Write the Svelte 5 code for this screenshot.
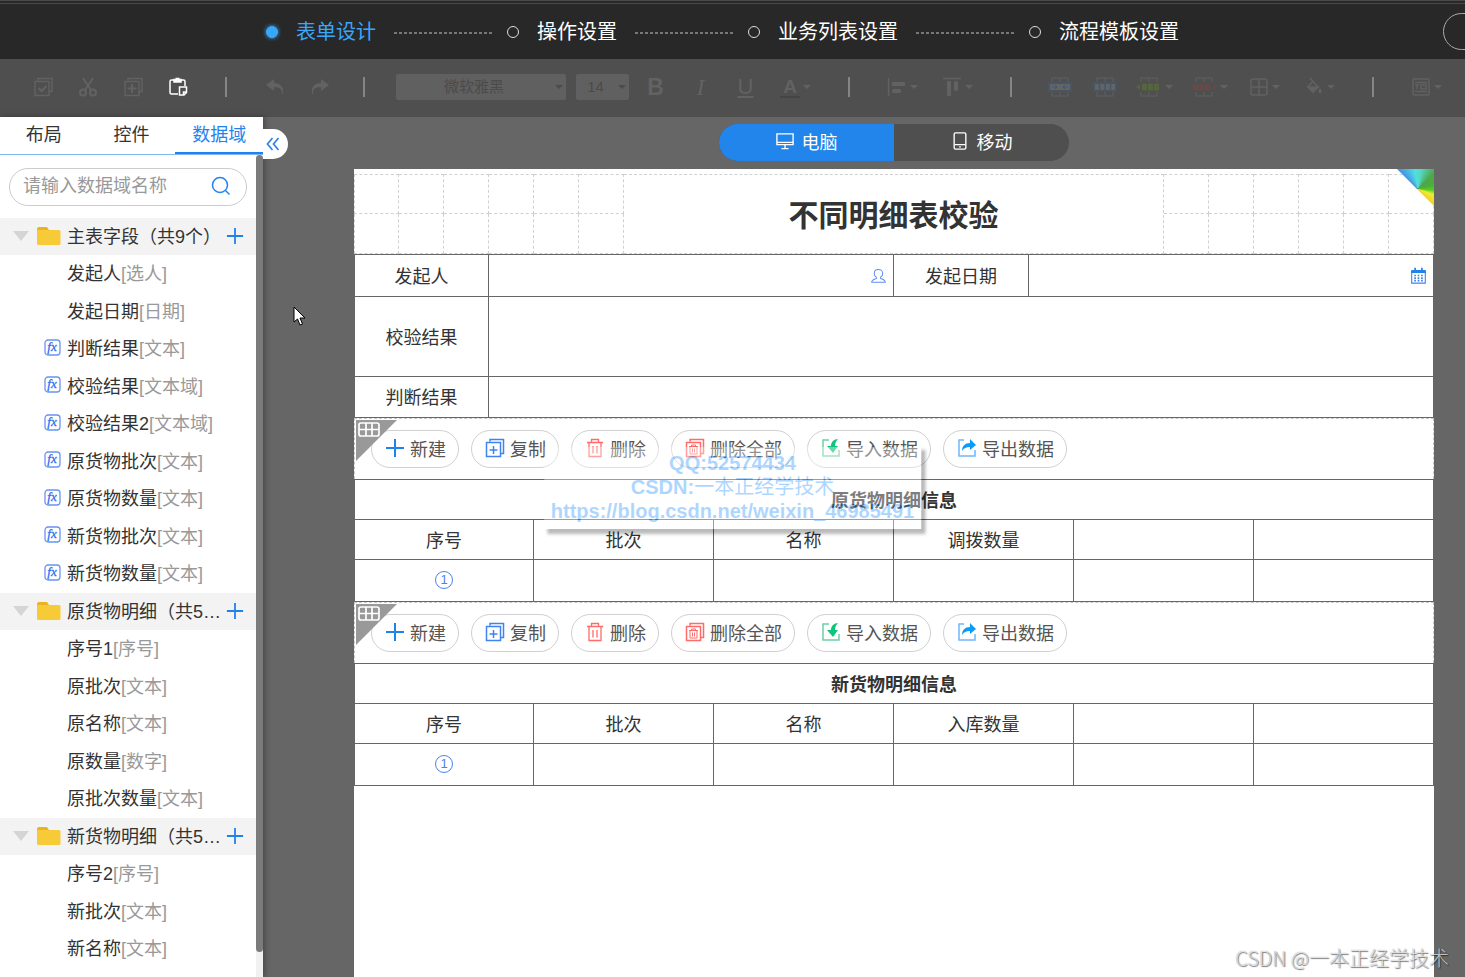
<script>
  const steps = ["表单设计", "操作设置", "业务列表设置", "流程模板设置"];
  let activeStep = $state(0);

  const tabs = ["布局", "控件", "数据域"];
  let activeTab = $state(2);

  let device = $state("pc");
  let keyword = $state("");

  const groups = [
    {
      name: "主表字段（共9个）",
      fields: [
        { name: "发起人", type: "选人" },
        { name: "发起日期", type: "日期" },
        { name: "判断结果", type: "文本", fx: true },
        { name: "校验结果", type: "文本域", fx: true },
        { name: "校验结果2", type: "文本域", fx: true },
        { name: "原货物批次", type: "文本", fx: true },
        { name: "原货物数量", type: "文本", fx: true },
        { name: "新货物批次", type: "文本", fx: true },
        { name: "新货物数量", type: "文本", fx: true },
      ],
    },
    {
      name: "原货物明细（共5个）",
      fields: [
        { name: "序号1", type: "序号" },
        { name: "原批次", type: "文本" },
        { name: "原名称", type: "文本" },
        { name: "原数量", type: "数字" },
        { name: "原批次数量", type: "文本" },
      ],
    },
    {
      name: "新货物明细（共5个）",
      fields: [
        { name: "序号2", type: "序号" },
        { name: "新批次", type: "文本" },
        { name: "新名称", type: "文本" },
        { name: "入库数量", type: "文本" },
      ],
    },
  ];

  const actions = [
    { icon: "plus", label: "新建" },
    { icon: "copy", label: "复制" },
    { icon: "trash", label: "删除" },
    { icon: "trashAll", label: "删除全部" },
    { icon: "import", label: "导入数据" },
    { icon: "export", label: "导出数据" },
  ];

  const details = [
    { title: "原货物明细信息", columns: ["序号", "批次", "名称", "调拨数量", "", ""] },
    { title: "新货物明细信息", columns: ["序号", "批次", "名称", "入库数量", "", ""] },
  ];

  const gridCells = [1, 2, 3, 4, 5, 6];
</script>

{#snippet icon(name)}
  <svg class="icon" width="20" height="20" viewBox="0 0 20 20" fill="none" stroke="currentColor" stroke-width="1.5" aria-hidden="true">
    {#if name === "selectAll"}
      <path d="M5 3.5V1.5h14v13h-3M2 4.5h14v14H2z" />
      <path d="M5.5 11l3 3 5-5" stroke-width="2" />
    {:else if name === "cut"}
      <path d="M5 1l8 12M15 1L7 13" stroke-width="2" />
      <circle cx="5" cy="15.5" r="3" stroke-width="2" />
      <circle cx="15" cy="15.5" r="3" stroke-width="2" />
    {:else if name === "duplicate"}
      <path d="M5 3.5V1.5h14v13h-3M2 4.5h14v14H2z" />
      <path d="M9 7v9M4.5 11.5h9" stroke-width="2" />
    {:else if name === "paste"}
      <path d="M6 3H3.5A1.5 1.5 0 002 4.5v11A1.5 1.5 0 003.5 17H10M13 3h2.5A1.5 1.5 0 0117 4.5V9" />
      <path d="M6 2.5h7V5H6z" fill="currentColor" />
      <path d="M7.5 1.5h4" />
      <path d="M11.5 10h7v5.5L16 18h-4.5zM18 15h-2.5v3" />
    {:else if name === "undo"}
      <path d="M1 8l8-6v4c6 0 10 4 9 10-1 2-2 2-1 0 0-4-3-6-8-6v4z" fill="currentColor" stroke="none" />
    {:else if name === "redo"}
      <path d="M19 8l-8-6v4C5 6 1 10 2 16c1 2 2 2 1 0 0-4 3-6 8-6v4z" fill="currentColor" stroke="none" />
    {:else if name === "alignLeft"}
      <path d="M1.5 1v18" />
      <rect x="5" y="5" width="13" height="4" rx="1" fill="currentColor" stroke="none" />
      <rect x="5" y="12" width="9" height="4" rx="2" fill="currentColor" stroke="none" />
    {:else if name === "alignTop"}
      <path d="M1 1.5h18" />
      <rect x="5" y="4" width="4" height="15" rx="1" fill="currentColor" stroke="none" />
      <rect x="12" y="4" width="4" height="10" rx="2" fill="currentColor" stroke="none" />
    {:else if name === "grid"}
      <rect x="2" y="2" width="16" height="16" rx="2" />
      <path d="M10 2v16M2 10h16" />
    {:else if name === "fill"}
      <path d="M6 1l8 9-5 5-5-5 5-6" />
      <path d="M4 10h10l-5 5z" fill="currentColor" />
      <path d="M16 11c2 3 2 5 0 5s-2-2 0-5z" fill="currentColor" stroke="none" />
    {:else if name === "label"}
      <rect x="2" y="2" width="16" height="16" rx="1" />
      <path d="M4 5.5h12M4 14.5h12M6 8v4M4.5 8H8M10 8h5v4h-5z" />
    {:else if name === "plus"}
      <path d="M10 1v18M1 10h18" stroke="#1f83ee" stroke-width="2" />
    {:else if name === "copy"}
      <path d="M5 3.5V1.5h13.5v14H16M1.5 4.5h14v14h-14zM8.5 8v8M4.5 12h8" stroke="#3f83ee" />
    {:else if name === "trash"}
      <path d="M2 4.5h16M6.5 4V1.5h7V4M4 5v13.5h12V5M8 8v7.5M12 8v7.5" stroke="#ff6b68" stroke-width="1.3" />
    {:else if name === "trashAll"}
      <path d="M5 3.5V1.5h13.5v14H16M1.5 4.5h14v14h-14z" stroke="#ff6b68" />
      <path d="M4 8.5h9M6.5 8V7h4v1M5 9v7h7V9M7.5 10.5v4M9.5 10.5v4" stroke="#ff6b68" stroke-width="1" />
    {:else if name === "import"}
      <path d="M8 2H2v16h16v-6" stroke="#6ccfa2" />
      <path d="M17 1c-4 0-7 3-7 7H6l6 7 5-7h-3c0-3 1-5 3-7z" fill="#0fc57b" stroke="none" />
    {:else if name === "export"}
      <path d="M7 2H2v16h16v-6" stroke="#6db8fb" />
      <path d="M5 13c0-5 3-8 8-8V1l6 6-6 5V9c-4 0-6 1-8 4z" fill="#0b9cf8" stroke="none" />
    {:else if name === "pc"}
      <path d="M1 2h18v12H1zM1 11.5h18M10 14v4M6 18.5h8" />
    {:else if name === "mobile"}
      <rect x="3.5" y="1" width="13" height="18" rx="1.5" />
      <path d="M4 14h12M9 16.5h2" />
    {:else if name === "search"}
      <circle cx="9" cy="9" r="7.5" />
      <path d="M14.5 14.5l4 4" />
    {:else if name === "user"}
      <path d="M10 3c-3 0-5 2-5 4.5 0 2 1 3.500 2.500 4.500v1.500C4 14.500 2 16 2 18h16c0-2-2-3.500-5.500-4.500V12C14 11 15 9.500 15 7.500 15 5 13 3 10 3z" stroke="#5c8ff0" stroke-width="1.2" />
    {:else if name === "calendar"}
      <path d="M2 5h16v14H2z" stroke="#3f83ee" stroke-width="1.3" />
      <path d="M1.5 3.500h17V7h-17zM5 1h2v3H5zM13 1h2v3h-2z" fill="#1f83ee" stroke="none" />
      <path d="M6 9v8M10 9v8M14 9v8" stroke="#3f83ee" stroke-width="2" stroke-dasharray="2 1" />
    {/if}
  </svg>
{/snippet}

{#snippet caret()}
  <svg class="caret" width="8" height="4" viewBox="0 0 8 4" aria-hidden="true"><path d="M0 0h8L4 4z" fill="currentColor" /></svg>
{/snippet}

{#snippet cellIcon(kind)}
  <svg class="icon" width="26" height="20" viewBox="0 0 26 20" fill="none" aria-hidden="true">
    <path d="M5 5V1h16v4M13 1v4M5 15v4h16v-4M13 15v4" stroke="#5b5b5b" stroke-width="1.5" />
    {#if kind === "merge"}
      <rect x="2" y="6" width="22" height="8" fill="#626466" stroke="#475566" stroke-width="2" />
      <path d="M5 10h5M8 8l2 2-2 2M21 10h-5M18 8l-2 2 2 2" stroke="#475566" />
    {:else if kind === "split"}
      <rect x="2" y="6" width="22" height="8" fill="#626466" stroke="#475566" stroke-width="2" />
      <path d="M7.5 6v8M13 6v8M18.5 6v8" stroke="#475566" stroke-width="1.5" />
    {:else if kind === "insert"}
      <path d="M0 10l4-3v6zM6 6.500h5v7H6zM12 6.500h5v7h-5zM18 6.500h5v7h-5z" fill="#55653f" />
    {:else}
      <path d="M26 10l-4-3v6zM2 6.500h5v7H2zM8 6.500h5v7H8zM14 6.500h5v7h-5z" fill="#694848" />
    {/if}
  </svg>
{/snippet}

<div class="designer">
  <header class="topbar">
    <nav class="steps">
      {#each steps as step, i}
        {#if i > 0}<span class="step-line"></span>{/if}
        <button class="step" class:active={activeStep === i} onclick={() => (activeStep = i)}>
          <span class="dot"></span>{step}
        </button>
      {/each}
    </nav>
    <button class="preview" aria-label="预览"></button>
  </header>

  <div class="toolbar">
    <button class="tool" aria-label="全选">{@render icon("selectAll")}</button>
    <button class="tool" aria-label="剪切">{@render icon("cut")}</button>
    <button class="tool" aria-label="复制">{@render icon("duplicate")}</button>
    <button class="tool enabled" aria-label="粘贴">{@render icon("paste")}</button>
    <span class="sep"></span>
    <button class="tool" aria-label="撤销">{@render icon("undo")}</button>
    <button class="tool" aria-label="重做">{@render icon("redo")}</button>
    <span class="sep before-select"></span>
    <span class="select family">
      <select aria-label="字体"><option>微软雅黑</option></select>
      {@render caret()}
    </span>
    <span class="select size">
      <select aria-label="字号"><option>14</option></select>
      {@render caret()}
    </span>
    <button class="tool letter bold">B</button>
    <button class="tool letter italic">I</button>
    <button class="tool letter under">U</button>
    <button class="tool wide letter color"><span>A</span>{@render caret()}</button>
    <span class="sep"></span>
    <button class="tool wide" aria-label="水平对齐">{@render icon("alignLeft")}{@render caret()}</button>
    <button class="tool wide" aria-label="垂直对齐">{@render icon("alignTop")}{@render caret()}</button>
    <span class="sep"></span>
    <button class="tool" aria-label="合并单元格">{@render cellIcon("merge")}</button>
    <button class="tool" aria-label="拆分单元格">{@render cellIcon("split")}</button>
    <button class="tool wide" aria-label="插入">{@render cellIcon("insert")}{@render caret()}</button>
    <button class="tool wide" aria-label="删除行列">{@render cellIcon("remove")}{@render caret()}</button>
    <button class="tool wide" aria-label="边框">{@render icon("grid")}{@render caret()}</button>
    <button class="tool wide" aria-label="填充">{@render icon("fill")}{@render caret()}</button>
    <span class="sep"></span>
    <button class="tool wide" aria-label="标签">{@render icon("label")}{@render caret()}</button>
  </div>

  <div class="body">
    <aside class="sidebar">
      <div class="tabs">
        {#each tabs as tab, i}
          <button class:active={activeTab === i} onclick={() => (activeTab = i)}>{tab}</button>
        {/each}
      </div>
      <div class="panel">
        <div class="panel-content">
          <label class="search">
            <input type="text" placeholder="请输入数据域名称" aria-label="数据域名称" bind:value={keyword} />
            {@render icon("search")}
          </label>
          {#each groups as group}
            <div class="group">
              <span class="arrow"></span>
              <svg class="folder" width="24" height="20" viewBox="0 0 24 20" aria-hidden="true">
                <path d="M0 3a2 2 0 012-2h8l2 3v4H0z" fill="#e9b420" />
                <path d="M0 4h22a1.5 1.5 0 011.5 1.5v12A1.5 1.5 0 0122 19H1.5A1.5 1.5 0 010 17.5z" fill="#f7ca38" />
              </svg>
              <span class="group-name">{group.name}</span>
              <button class="add" aria-label="添加">{@render icon("plus")}</button>
            </div>
            <ul>
              {#each group.fields as field}
                <li>
                  <span class="mark">
                    {#if field.fx}
                      <svg width="17" height="17" viewBox="0 0 17 17" aria-hidden="true">
                        <rect x="1" y="1" width="15" height="15" rx="3" fill="none" stroke="#6b93f1" stroke-width="1.3" />
                        <text x="8" y="12" text-anchor="middle">fx</text>
                      </svg>
                    {/if}
                  </span>
                  {field.name}<em>[{field.type}]</em>
                </li>
              {/each}
            </ul>
          {/each}
        </div>
        <div class="track"><div class="thumb"></div></div>
      </div>
      <button class="collapse" aria-label="收起">
        <svg width="14" height="14" viewBox="0 0 14 14" fill="none" stroke="#2f80ed" stroke-width="1.7" aria-hidden="true">
          <path d="M6.5 1l-5 6 5 6M12.5 1l-5 6 5 6" />
        </svg>
      </button>
    </aside>

    <main class="canvas">
      <div class="devices">
        <button class:active={device === "pc"} onclick={() => (device = "pc")}>{@render icon("pc")}电脑</button>
        <button class:active={device === "mobile"} onclick={() => (device = "mobile")}>{@render icon("mobile")}移动</button>
      </div>

      <div class="paper">
        <div class="corner"></div>
        <table class="title-grid">
          <tbody>
            <tr>
              {#each gridCells as n (n)}<td></td>{/each}
              <td class="form-title" colspan="12" rowspan="2">不同明细表校验</td>
              {#each gridCells as n (n)}<td></td>{/each}
            </tr>
            <tr>
              {#each gridCells as n (n)}<td></td>{/each}
              {#each gridCells as n (n)}<td></td>{/each}
            </tr>
          </tbody>
        </table>

        <table class="form">
          <colgroup>
            <col class="c3" /><col class="c9" /><col class="c3" /><col class="c9" />
          </colgroup>
          <tbody>
            <tr class="head">
              <th>发起人</th>
              <td class="field">{@render icon("user")}</td>
              <th>发起日期</th>
              <td class="field">{@render icon("calendar")}</td>
            </tr>
            <tr class="tall">
              <th>校验结果</th>
              <td colspan="3"></td>
            </tr>
            <tr class="last">
              <th>判断结果</th>
              <td colspan="3"></td>
            </tr>
          </tbody>
        </table>

        {#each details as detail}
          <div class="detail-bar">
            <span class="tag">
              <svg width="22" height="15" viewBox="0 0 22 15" fill="none" stroke="#fff" stroke-width="1.7" aria-hidden="true">
                <rect x="1" y="1" width="20" height="13" rx="2" />
                <path d="M1 7.5h20M8 1v13M14 1v13" />
              </svg>
            </span>
            {#each actions as action}
              <button>{@render icon(action.icon)}{action.label}</button>
            {/each}
          </div>
          <table class="form detail">
            <tbody>
              <tr class="head"><th class="caption" colspan="6">{detail.title}</th></tr>
              <tr>
                {#each detail.columns as column}<th>{column}</th>{/each}
              </tr>
              <tr class="last">
                <td><span class="num">1</span></td>
                <td></td><td></td><td></td><td></td><td></td>
              </tr>
            </tbody>
          </table>
        {/each}
      </div>
    </main>
  </div>

  <div class="notice">
    <p>QQ:52574434</p>
    <p>CSDN:<span>一本正经学技术</span></p>
    <p>https://blog.csdn.net/weixin_46985491</p>
  </div>

  <svg class="cursor" width="13" height="20" viewBox="0 0 13 20" aria-hidden="true">
    <path d="M1 1v15l3.500-3 2.500 6 2.500-1-2.500-6H12z" fill="#fff" stroke="#000" />
  </svg>

  <div class="watermark">CSDN @一本正经学技术</div>
</div>

<style>
  :global(body) {
    background: #666;
  }

  .designer {
    position: relative;
    display: flex;
    flex-direction: column;
    height: 100vh;
    overflow: hidden;
    font-family: "Liberation Sans", "Noto Sans CJK SC", sans-serif;
    font-size: 18px;
    color: #333;
  }

  .designer * {
    box-sizing: border-box;
  }

  button {
    display: flex;
    align-items: center;
    justify-content: center;
    padding: 0;
    border: 0;
    background: none;
    font: inherit;
    color: inherit;
    cursor: pointer;
  }

  .icon,
  .caret {
    flex: none;
  }

  .topbar {
    position: relative;
    display: flex;
    justify-content: center;
    flex: none;
    height: 59px;
    padding: 0 20px 2px 0;
    border-top: 4px double #4a4a4a;
    background: #282828;
  }

  .steps {
    display: flex;
    align-items: center;
  }

  .step {
    gap: 18px;
    font-size: 20px;
    color: #fff;
    white-space: nowrap;
  }

  .dot {
    width: 12px;
    height: 12px;
    margin-top: 2px;
    border: 1px solid #ddd;
    border-radius: 50%;
  }

  .step.active {
    color: #39a7fb;
  }

  .step.active .dot {
    border-color: #39a7fb;
    background: #39a7fb;
    box-shadow: 0 0 4px #39a7fb;
  }

  .step-line {
    width: 100px;
    height: 2px;
    margin: 4px 13px 0 18px;
    background: repeating-linear-gradient(90deg, #777 0 3px, transparent 3px 5px);
  }

  .preview {
    position: absolute;
    top: 9px;
    right: -90px;
    width: 112px;
    height: 37px;
    border: 1px solid #aaa;
    border-radius: 19px;
  }

  .toolbar {
    display: flex;
    align-items: center;
    flex: none;
    height: 58px;
    padding: 0 0 2px 20px;
    background: #4f4f4f;
    color: #626262;
  }

  .tool {
    flex: none;
    width: 45px;
    height: 30px;
  }

  .tool.enabled {
    color: #fff;
  }

  .tool.wide {
    gap: 3px;
    width: 55px;
  }

  .sep {
    flex: none;
    width: 2px;
    height: 20px;
    margin: 0 25px;
    background: #858585;
  }

  .sep.before-select {
    margin: 0 31px 0 21px;
  }

  .select {
    position: relative;
    flex: none;
    height: 26px;
    border-radius: 2px;
    background: #606060;
    color: #4b4b4b;
  }

  .select select {
    width: 100%;
    height: 100%;
    padding: 0 14px 2px 0;
    border: 0;
    background: none;
    appearance: none;
    font: inherit;
    font-size: 15px;
    color: inherit;
    text-align-last: center;
  }

  .select .caret {
    position: absolute;
    top: 11px;
    right: 3px;
  }

  .family {
    width: 170px;
    margin-right: 10px;
  }

  .size {
    width: 53px;
    margin-right: 4px;
  }

  .letter {
    font-size: 22px;
  }

  .bold {
    font-size: 23px;
    font-weight: bold;
  }

  .italic {
    font-family: "Liberation Serif", serif;
    font-style: italic;
    font-size: 24px;
  }

  .under {
    text-decoration: underline;
  }

  .color {
    font-weight: bold;
  }

  .color span {
    width: 20px;
    border-bottom: 2px solid #454545;
    font-size: 19px;
    line-height: 19px;
  }

  .body {
    display: flex;
    flex: 1;
    min-height: 0;
    background: #666;
  }

  .sidebar {
    position: relative;
    display: flex;
    flex-direction: column;
    flex: none;
    width: 263px;
    background: #fff;
    box-shadow: 2px 0 6px rgba(0, 0, 0, 0.3);
  }

  .tabs {
    display: flex;
    flex: none;
    height: 38px;
    border-bottom: 1px solid #7fb8f5;
  }

  .tabs button {
    flex: 1;
    height: 37px;
    padding-bottom: 4px;
    border-bottom: 2px solid transparent;
  }

  .tabs .active {
    border-color: #1f83ee;
    color: #1f83ee;
  }

  .panel {
    display: flex;
    flex: 1;
    min-height: 0;
  }

  .panel-content {
    flex: 1;
    min-width: 0;
    overflow: hidden;
  }

  .track {
    width: 7px;
    background: #f1f1f1;
  }

  .thumb {
    height: 97%;
    border-radius: 4px;
    background: #7b7b7b;
  }

  .search {
    display: flex;
    align-items: center;
    height: 38px;
    margin: 13px 9px 12px;
    padding: 0 15px 2px 13px;
    border: 1px solid #ccc;
    border-radius: 19px;
    color: #1f83ee;
  }

  .search input {
    flex: 1;
    min-width: 0;
    padding: 0;
    border: 0;
    outline: 0;
    background: none;
    font: inherit;
    color: #333;
  }

  .search input::placeholder {
    color: #999;
  }

  .group {
    display: flex;
    align-items: center;
    height: 37px;
    padding: 0 12px 2px 13px;
    background: #f3f3f3;
  }

  .arrow {
    border: 8px solid transparent;
    border-top: 10px solid #d5d5d5;
    border-bottom: 0;
  }

  .folder {
    flex: none;
    margin: 0 6px 0 8px;
  }

  .group-name {
    flex: 1;
    padding-bottom: 2px;
    overflow: hidden;
    white-space: nowrap;
    text-overflow: ellipsis;
  }

  .add {
    flex: none;
  }

  .add .icon {
    width: 18px;
    height: 18px;
  }

  ul {
    margin: 0;
    padding: 0;
    list-style: none;
  }

  li {
    display: flex;
    align-items: center;
    height: 38px;
    padding-bottom: 4px;
    white-space: nowrap;
  }

  li:nth-child(even) {
    height: 37px;
  }

  .mark {
    display: flex;
    justify-content: flex-end;
    width: 61px;
    margin-right: 6px;
  }

  .mark text {
    font-family: "Liberation Serif", serif;
    font-size: 13px;
    font-style: italic;
    fill: #2f6df0;
    stroke: #2f6df0;
    stroke-width: 0.3px;
  }

  em {
    font-style: normal;
    color: #999;
  }

  .collapse {
    position: absolute;
    top: 12px;
    left: 100%;
    width: 25px;
    height: 30px;
    padding-right: 5px;
    border-radius: 0 15px 15px 0;
    background: #fff;
  }

  .canvas {
    display: flex;
    flex-direction: column;
    flex: 1;
    min-width: 0;
    padding: 7px 31px 0 91px;
  }

  .devices {
    display: flex;
    flex: none;
    align-self: center;
    width: 350px;
    height: 37px;
    margin-bottom: 8px;
    border-radius: 19px;
    background: #4f4f4f;
    color: #fff;
    overflow: hidden;
  }

  .devices button {
    flex: 1;
    gap: 8px;
    padding-bottom: 3px;
  }

  .devices .icon {
    width: 18px;
    height: 18px;
  }

  .devices .active {
    background: #2185eb;
  }

  .paper {
    position: relative;
    flex: 1;
    padding-top: 5px;
    background: #fff;
  }

  .corner {
    position: absolute;
    top: 0;
    right: 0;
    width: 37px;
    height: 37px;
    background: conic-gradient(from 270deg at 21px 20px, #3f7fe0, #4596e6 45deg, #4fe0e0 80deg, #55d8c0 100deg, #4da64d 135deg, #4cae3c 165deg, #55d020 185deg, #e8ee30 200deg, #f5d228 225deg, #f0a020);
    clip-path: polygon(0 0, 100% 0, 100% 100%);
  }

  table {
    width: 100%;
    border-collapse: separate;
    border-spacing: 0;
    table-layout: fixed;
  }

  td,
  th {
    padding: 0 0 2px;
    font-weight: normal;
    text-align: center;
  }

  .title-grid td {
    height: 40px;
    border: 0 dashed #d0d0d0;
    border-width: 0 1px 1px 0;
  }

  .title-grid tr:first-child td {
    border-top-width: 1px;
  }

  .title-grid td:first-child {
    border-left-width: 1px;
  }

  .title-grid .form-title {
    font-size: 30px;
    font-weight: bold;
  }

  .form td,
  .form th {
    height: 40px;
    border: 0 solid #666;
    border-width: 0 1px 1px 0;
  }

  .form td:first-child,
  .form th:first-child {
    border-left-width: 1px;
  }

  .form .head > * {
    height: 43px;
    border-top-width: 1px;
  }

  .form .tall > * {
    height: 80px;
  }

  .form .last > * {
    height: 41px;
  }

  .detail .head > * {
    height: 41px;
  }

  .detail .last > * {
    height: 42px;
  }

  .form .caption {
    font-weight: bold;
  }

  .c3 {
    width: 12.5%;
  }

  .c9 {
    width: 37.5%;
  }

  .form .field {
    padding-right: 6px;
    text-align: right;
  }

  .field .icon {
    width: 17px;
    height: 17px;
    vertical-align: middle;
  }

  .detail-bar {
    position: relative;
    display: flex;
    align-items: center;
    gap: 12px;
    height: 61px;
    padding-left: 16px;
    border: 1px dashed #c8c8c8;
    border-bottom: 0;
  }

  .detail-bar button {
    gap: 5px;
    height: 38px;
    padding: 0 12px 2px 13px;
    border: 1px solid #d0d0d0;
    border-radius: 19px;
    background: #fff;
    color: #555;
    white-space: nowrap;
  }

  .tag {
    position: absolute;
    top: 1px;
    left: 1px;
    width: 41px;
    height: 41px;
    padding: 2px;
    background: #999;
    line-height: 0;
    clip-path: polygon(0 0, 100% 0, 0 100%);
  }

  .num {
    display: inline-block;
    width: 18px;
    height: 18px;
    border: 1px solid #4c82ee;
    border-radius: 50%;
    font-size: 13px;
    line-height: 16px;
    color: #4c82ee;
    vertical-align: middle;
  }

  .notice {
    position: absolute;
    top: 447px;
    left: 50%;
    padding: 4px 7px 6px;
    background: #fff;
    box-shadow: 4px 4px 3px 1px rgba(0, 0, 0, 0.75);
    color: #1e90ff;
    font-size: 20px;
    font-weight: bold;
    line-height: 24px;
    text-align: center;
    white-space: nowrap;
    opacity: 0.36;
    transform: translateX(-50%);
  }

  .notice p {
    margin: 0;
  }

  .notice span {
    font-weight: normal;
  }

  .cursor {
    position: absolute;
    top: 306px;
    left: 293px;
  }

  .watermark {
    position: absolute;
    right: 16px;
    bottom: 5px;
    font-family: "Noto Sans CJK SC", sans-serif;
    font-size: 20px;
    font-weight: 300;
    line-height: 28px;
    color: rgba(255, 255, 255, 0.7);
    text-shadow: 1px 1px 1px rgba(0, 0, 0, 0.5), 0 0 1px rgba(0, 0, 0, 0.4);
  }
</style>
